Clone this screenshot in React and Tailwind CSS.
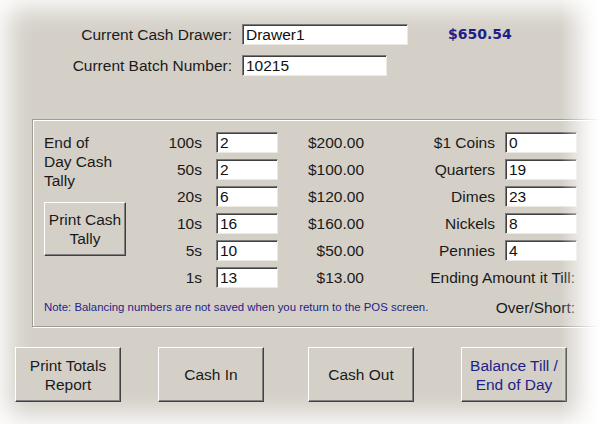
import React from "react";

const navy = "text-[#1e1e88]";

function Field({ value, className = "" }) {
  return (
    <div
      className={`h-[21px] bg-white border border-t-[#7a7a7a] border-l-[#7a7a7a] border-r-[#ece9e2] border-b-[#ece9e2] shadow-[inset_1px_1px_0_#404040] pl-[3px] leading-[19px] text-[#111] ${className}`}
    >
      {value}
    </div>
  );
}

function WinButton({ children, className = "" }) {
  return (
    <button
      className={`flex items-center justify-center text-center leading-[19px] bg-[#d4d0c8] border border-t-white border-l-white border-r-[#404040] border-b-[#404040] shadow-[inset_-1px_-1px_0_#808080] ${className}`}
    >
      {children}
    </button>
  );
}

const bills = [
  ["100s", "2", "$200.00"],
  ["50s", "2", "$100.00"],
  ["20s", "6", "$120.00"],
  ["10s", "16", "$160.00"],
  ["5s", "10", "$50.00"],
  ["1s", "13", "$13.00"],
];

const coins = [
  ["$1 Coins", "0"],
  ["Quarters", "19"],
  ["Dimes", "23"],
  ["Nickels", "8"],
  ["Pennies", "4"],
];

export default function App() {
  return (
    <div className="relative w-[600px] h-[424px] overflow-hidden bg-[#d4d0c8] shadow-[inset_0_0_26px_8px_#fff] font-['Liberation_Sans',Arial,sans-serif] text-[15.5px] leading-[21px] text-[#1a1a1a] pt-[24px]">
      {/* Drawer / batch */}
      <div className="flex items-center h-[21px]">
        <div className="w-[232px] text-right">Current Cash Drawer:</div>
        <Field value="Drawer1" className="ml-[10px] w-[166px]" />
        <div className={`ml-[40px] font-['DejaVu_Sans',sans-serif] text-[14px] font-bold ${navy}`}>
          $650.54
        </div>
      </div>
      <div className="flex items-center h-[21px] mt-[10px]">
        <div className="w-[232px] text-right">Current Batch Number:</div>
        <Field value="10215" className="ml-[10px] w-[145px]" />
      </div>

      {/* Cash tally group */}
      <div className="ml-[32px] mt-[43px] w-[580px] h-[208px] border border-[#a09c94] shadow-[inset_1px_1px_0_#fff,1px_1px_0_#fff] pt-[12px]">
        <div className="flex">
          <div className="w-[92px] pl-[11px]">
            <div className="leading-[19px] pt-[1px]">
              End of
              <br />
              Day Cash
              <br />
              Tally
            </div>
            <WinButton className="mt-[12px] w-[82px] h-[54px]">
              Print Cash
              <br />
              Tally
            </WinButton>
          </div>

          <div className="grid grid-cols-[77px_76px_86px_141px_72px] gap-y-[6px] items-center">
            {bills.map(([label, count, amount], i) => (
              <React.Fragment key={label}>
                <div className="text-right">{label}</div>
                <Field value={count} className="ml-[14px] w-[62px]" />
                <div className="text-right">{amount}</div>
                {i < 5 ? (
                  <>
                    <div className="text-right pr-[10px]">{coins[i][0]}</div>
                    <Field value={coins[i][1]} />
                  </>
                ) : (
                  <div className="col-span-2 text-right pr-[2px]">Ending Amount it Till:</div>
                )}
              </React.Fragment>
            ))}
          </div>
        </div>

        <div className="flex items-center mt-[9px] pl-[11px]">
          <div className={`text-[11.4px] ${navy}`}>
            Note: Balancing numbers are not saved when you return to the POS screen.
          </div>
          <div className="ml-auto mr-[36px]">Over/Short:</div>
        </div>
      </div>

      {/* Bottom buttons */}
      <div className="flex mt-[20px] pl-[15px]">
        <WinButton className="w-[106px] h-[55px]">
          Print Totals
          <br />
          Report
        </WinButton>
        <WinButton className="ml-[37px] w-[106px] h-[55px]">Cash In</WinButton>
        <WinButton className="ml-[44px] w-[106px] h-[55px]">Cash Out</WinButton>
        <WinButton className={`ml-[47px] w-[106px] h-[55px] ${navy}`}>
          Balance Till /
          <br />
          End of Day
        </WinButton>
      </div>

      {/* soft right edge fade */}
      <div className="pointer-events-none absolute top-0 right-0 h-full w-[40px] bg-linear-to-r from-white/0 to-white" />
    </div>
  );
}
